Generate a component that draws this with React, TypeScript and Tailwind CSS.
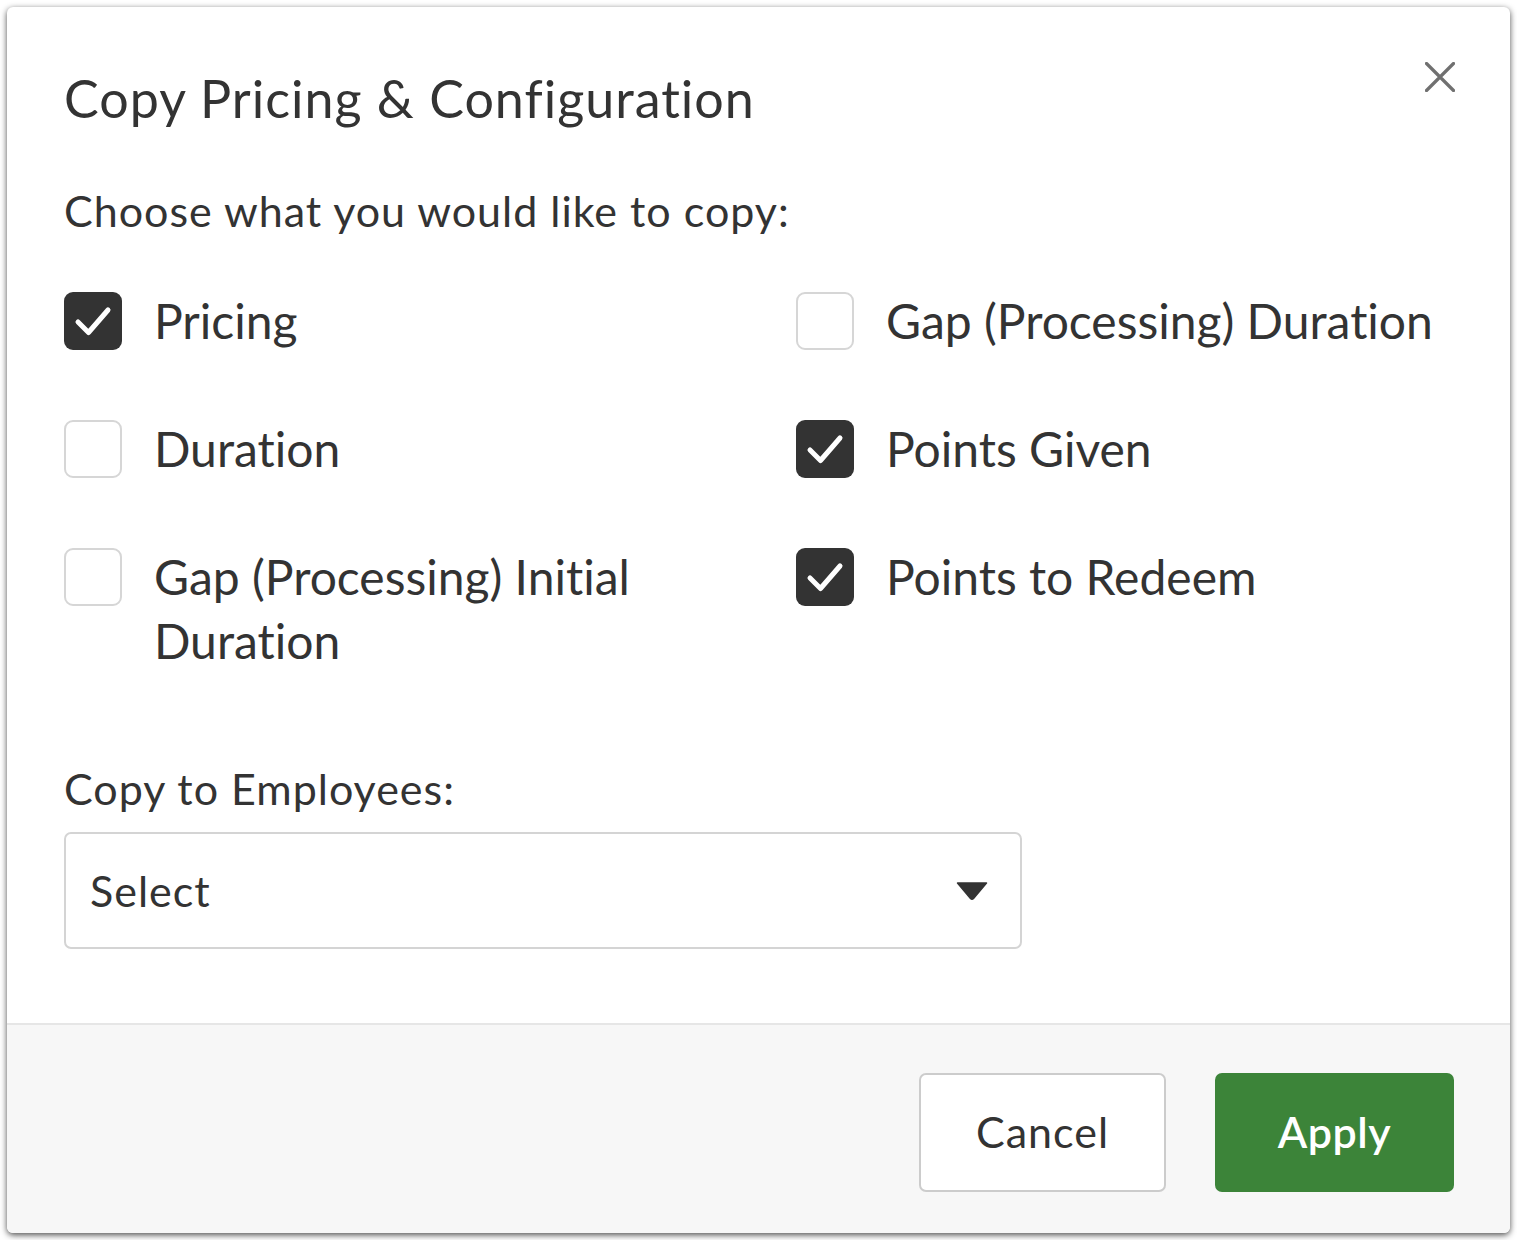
import React from "react";

function CheckBox({ checked }: { checked: boolean }) {
  if (checked) {
    return (
      <div className="mt-[3px] flex h-[58px] w-[58px] shrink-0 items-center justify-center rounded-[9px] bg-[#333333]">
        <svg width="58" height="58" viewBox="0 0 58 58" fill="none">
          <path d="M14 30 L24.5 40.5 L44 18" stroke="#ffffff" strokeWidth="5" strokeLinecap="round" strokeLinejoin="round" />
        </svg>
      </div>
    );
  }
  return <div className="mt-[3px] h-[58px] w-[58px] shrink-0 rounded-[9px] border-2 border-[#d6d6d6] bg-white" />;
}

function Option({ label, checked, narrow }: { label: string; checked: boolean; narrow?: boolean }) {
  return (
    <div className="flex items-start gap-[32px]">
      <CheckBox checked={checked} />
      <span className={"text-[48px] leading-[64px] text-[#333333] " + (narrow ? "max-w-[560px]" : "")}>{label}</span>
    </div>
  );
}

export default function App() {
  return (
    <div className="bg-white p-[7px] [font-variant-ligatures:none]" style={{ fontFamily: "Lato, 'Open Sans', sans-serif" }}>
      <div className="relative flex w-[1503px] flex-col overflow-hidden rounded-[6px] bg-white shadow-[0_2px_6px_rgba(0,0,0,0.7)]">
        <button className="absolute right-[55px] top-[55px] h-[30px] w-[30px]" aria-label="Close">
          <svg width="30" height="30" viewBox="0 0 30 30" fill="none">
            <path d="M1.5 1.5 L28.5 28.5 M28.5 1.5 L1.5 28.5" stroke="#707070" strokeWidth="3.2" strokeLinecap="round" />
          </svg>
        </button>
        <div className="flex flex-col px-[57px] pt-[61px] pb-[74px]">
          <h1 className="text-[52px] leading-[60px] tracking-[1px] text-[#333333]">Copy Pricing &amp; Configuration</h1>
          <p className="mt-[58px] text-[43px] leading-[50px] tracking-[1px] text-[#333333]">Choose what you would like to copy:</p>
          <div className="mt-[53px] grid grid-cols-[732px_1fr] gap-y-[64px]">
            <Option label="Pricing" checked />
            <Option label="Gap (Processing) Duration" checked={false} />
            <Option label="Duration" checked={false} />
            <Option label="Points Given" checked />
            <Option label="Gap (Processing) Initial Duration" checked={false} narrow />
            <Option label="Points to Redeem" checked />
          </div>
          <p className="mt-[91px] text-[43px] leading-[50px] tracking-[1px] text-[#333333]">Copy to Employees:</p>
          <div className="mt-[18px] flex h-[117px] w-[958px] items-center justify-between rounded-[7px] border-2 border-[#d4d4d4] bg-white pl-[24px] pr-[32px]">
            <span className="text-[43px] leading-[50px] tracking-[1px] text-[#333333]">Select</span>
            <svg width="32" height="18" viewBox="0 0 32 18">
              <path d="M1.5 1 L30.5 1 L17.5 16.5 Q16 18 14.5 16.5 Z" fill="#333333" stroke="#333333" strokeWidth="1.5" strokeLinejoin="round" />
            </svg>
          </div>
        </div>
        <div className="flex justify-end gap-[49px] border-t-2 border-[#e6e6e6] bg-[#f7f7f7] pt-[48px] pb-[41px] pr-[56px]">
          <button className="flex h-[119px] w-[247px] items-center justify-center rounded-[7px] border-2 border-[#cccccc] bg-white text-[43px] tracking-[1px] text-[#333333]">
            Cancel
          </button>
          <button className="flex h-[119px] w-[239px] items-center justify-center rounded-[7px] bg-[#3c8439] text-[43px] font-semibold tracking-[0.5px] text-white">
            Apply
          </button>
        </div>
      </div>
    </div>
  );
}
